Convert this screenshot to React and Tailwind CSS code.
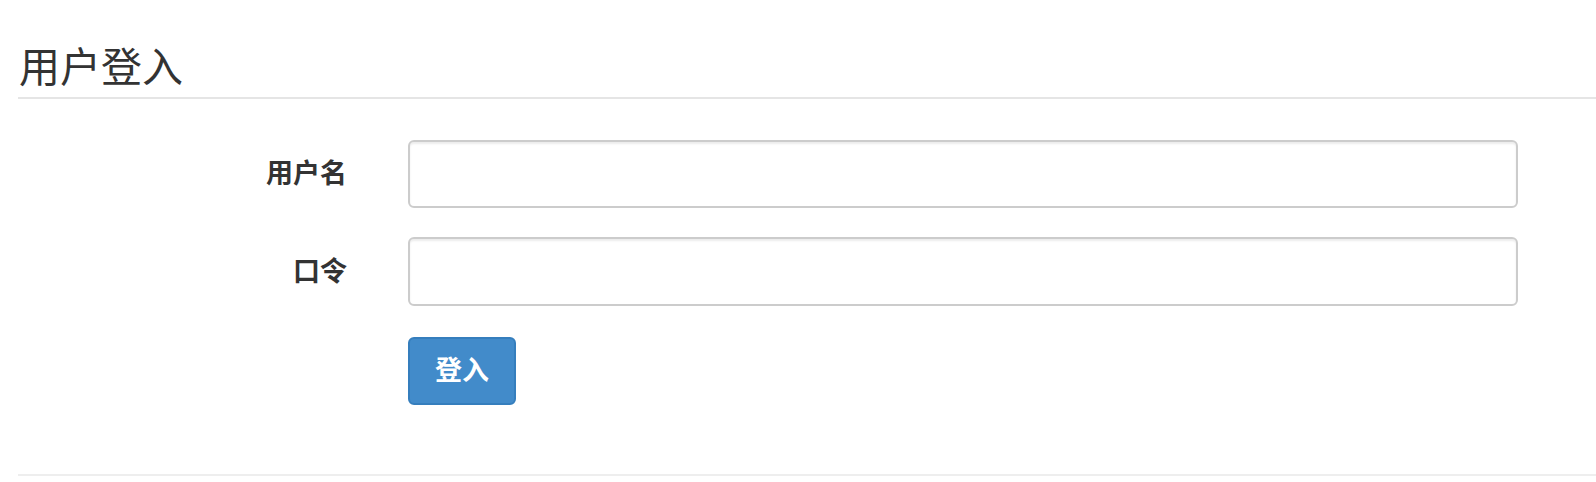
import React, { useState } from 'react';

const font = { fontFamily: '"Helvetica Neue", "Liberation Sans", "Noto Sans CJK SC", sans-serif' };

const App = () => {
    const [form, setForm] = useState({ username: '', password: '' });

    const handleChange = (e) => {
        const { name, value } = e.target;
        setForm((prev) => ({ ...prev, [name]: value }));
    };

    return (
        <div className="min-h-screen bg-white pl-[18px] text-[#333]" style={font}>
            {/* Header */}
            <div className="pt-[46px] pb-[6px] border-b-2 border-[#e5e5e5]">
                <h1 className="text-[41px] leading-[1.1] font-normal pl-[1px]">用户登入</h1>
            </div>

            {/* Form */}
            <form
                onSubmit={(e) => e.preventDefault()}
                className="grid grid-cols-[329px_1110px] gap-x-[61px] pt-[41px] pb-[69px] border-b-2 border-[#eeeeee]"
            >
                <label className="self-center text-right text-[27px] font-bold pt-[1px]">用户名</label>
                <input
                    type="text"
                    name="username"
                    value={form.username}
                    onChange={handleChange}
                    className="h-[68px] w-full px-4 border-2 border-[#cccccc] rounded-[6px] bg-white text-[24px] outline-none shadow-[inset_0_2px_2px_rgba(0,0,0,0.075)]"
                />

                <label className="mt-[29px] self-center text-right text-[27px] font-bold pt-[1px]">口令</label>
                <input
                    type="password"
                    name="password"
                    value={form.password}
                    onChange={handleChange}
                    className="mt-[29px] h-[69px] w-full px-4 border-2 border-[#cccccc] rounded-[6px] bg-white text-[24px] outline-none shadow-[inset_0_2px_2px_rgba(0,0,0,0.075)]"
                />

                <div />
                <div className="mt-[31px]">
                    <button
                        type="submit"
                        className="h-[68px] w-[108px] bg-[#428bca] border-2 border-[#357ebd] rounded-[6px] text-white text-[27px] font-bold"
                    >
                        登入
                    </button>
                </div>
            </form>
        </div>
    );
};

export default App;
